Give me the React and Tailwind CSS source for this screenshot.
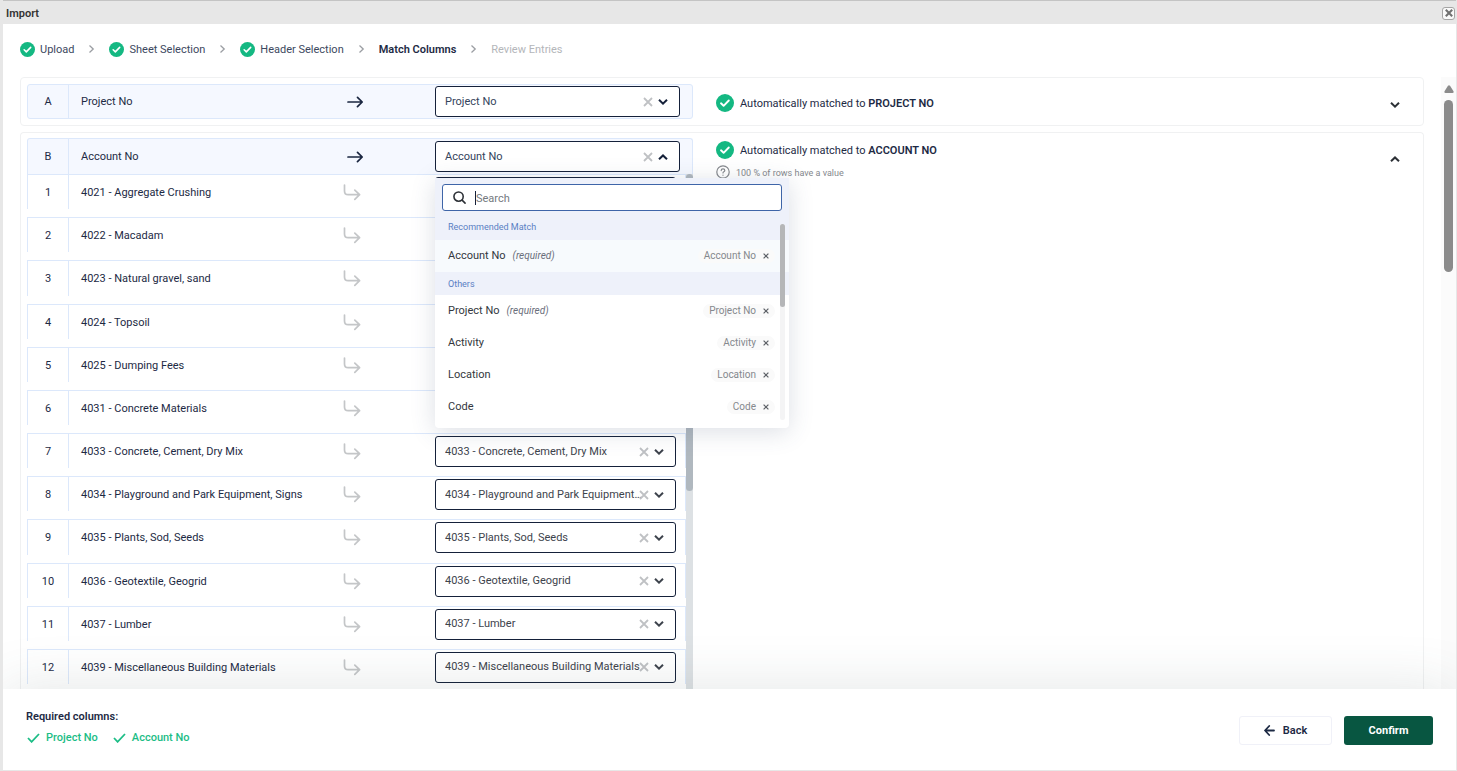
const ENTRIES = [
  '4021 - Aggregate Crushing',
  '4022 - Macadam',
  '4023 - Natural gravel, sand',
  '4024 - Topsoil',
  '4025 - Dumping Fees',
  '4031 - Concrete Materials',
  '4033 - Concrete, Cement, Dry Mix',
  '4034 - Playground and Park Equipment, Signs',
  '4035 - Plants, Sod, Seeds',
  '4036 - Geotextile, Geogrid',
  '4037 - Lumber',
  '4039 - Miscellaneous Building Materials',
];

const STEPS = [
  { label: 'Upload', state: 'done' },
  { label: 'Sheet Selection', state: 'done' },
  { label: 'Header Selection', state: 'done' },
  { label: 'Match Columns', state: 'current' },
  { label: 'Review Entries', state: 'todo' },
];

const OTHERS = [
  { name: 'Project No', required: true },
  { name: 'Activity' },
  { name: 'Location' },
  { name: 'Code' },
];

function CheckCircle({ className }) {
  return (
    <svg viewBox="0 0 18 18" className={className} aria-hidden="true">
      <circle cx="9" cy="9" r="9" fill="#14b882" />
      <path d="M5 9.3l2.6 2.5 5.2-5.3" fill="none" stroke="#fff" strokeWidth="1.9" strokeLinecap="round" strokeLinejoin="round" />
    </svg>
  );
}

function Chevron({ up, className }) {
  return (
    <svg viewBox="0 0 10 6" className={className} fill="none" stroke="currentColor" strokeWidth="2" aria-hidden="true">
      <path d={up ? 'M1 5.2L5 1.4l4 3.8' : 'M1 .8l4 3.8L9 .8'} />
    </svg>
  );
}

function Cross({ className, width = 1.6 }) {
  return (
    <svg viewBox="0 0 10 10" className={className} fill="none" stroke="currentColor" strokeWidth={width} aria-hidden="true">
      <path d="M1 1l8 8M9 1L1 9" />
    </svg>
  );
}

function ArrowRight() {
  return (
    <svg viewBox="0 0 16 12" className="h-3 w-4" fill="none" stroke="#1a2640" strokeWidth="1.7" strokeLinecap="round" strokeLinejoin="round" aria-hidden="true">
      <path d="M1 6h14M10.5 1.3L15.2 6l-4.7 4.7" />
    </svg>
  );
}

function ArrowSub() {
  return (
    <svg viewBox="0 0 18 18" className="size-[18px]" fill="none" stroke="#c4c6c8" strokeWidth="1.7" strokeLinecap="round" strokeLinejoin="round" aria-hidden="true">
      <path d="M1.5 2v6q0 3.7 3.7 3.7H16.5M11.8 7.2l4.8 4.5-4.8 4.6" />
    </svg>
  );
}

function Check() {
  return (
    <svg viewBox="0 0 13 10" className="h-[10px] w-[13px]" fill="none" stroke="currentColor" strokeWidth="1.8" aria-hidden="true">
      <path d="M1 5l3.6 3.8L12 1" />
    </svg>
  );
}

function ClearButton({ label }) {
  return (
    <button type="button" aria-label={`Clear ${label}`} className="shrink-0 text-[#bfc1c4]">
      <Cross className="size-[10px]" width={1.8} />
    </button>
  );
}

function MatchSelect({ value, label, dark }) {
  return (
    <div className="flex h-[31px] w-full items-center rounded-[3px] border border-[#15213a] bg-white pl-[9px] pr-[11px]">
      <select
        aria-label={`Match for ${label}`}
        defaultValue={value}
        className={`-mr-1 min-w-0 flex-1 appearance-none truncate bg-transparent outline-none ${dark ? 'text-[#34435c]' : 'text-[#3d434c]'}`}
      >
        <option>{value}</option>
      </select>
      <ClearButton label={label} />
      <Chevron className={`ml-[5px] h-[6px] w-[10px] shrink-0 ${dark ? 'text-[#15213a]' : 'text-[#3d434c]'}`} />
    </div>
  );
}

function HeadRow({ letter, name, children }) {
  return (
    <div className="flex h-full items-stretch">
      <div className="flex w-10 shrink-0 items-center justify-center">{letter}</div>
      <div className="flex flex-1 items-center border-l border-[#dce8fb] pl-3">{name}</div>
      <div className="flex w-[88px] items-center">
        <ArrowRight />
      </div>
      <div className="relative mr-3 w-[245px] shrink-0 self-center">{children}</div>
    </div>
  );
}

function EntryRow({ index, name }) {
  return (
    <div className="flex border-l border-t border-r border-[#dce8fb]">
      <div className="flex w-10 shrink-0 items-center justify-center pt-[2px]">{index}</div>
      <div className="flex flex-1 items-center border-l border-[#dce8fb] pl-3 pt-[2px]">{name}</div>
      <div className="flex w-[92px] items-center">
        <ArrowSub />
      </div>
      <div className="mr-[9px] w-[241px] shrink-0 pt-[2px]">
        <MatchSelect value={name} label={name} />
      </div>
    </div>
  );
}

function Option({ name, required, active }) {
  return (
    <li role="option" aria-selected={!!active} className={`flex h-8 items-center justify-between pl-[13px] pr-[14px] text-[#33373d] ${active ? 'bg-[#f7fafd]' : ''}`}>
      <span>
        {name}
        {required && <em className="ml-[7px] text-[10px] text-[#6a6e7b]">(required)</em>}
      </span>
      <span className="flex h-[14px] items-center gap-[7px] rounded-full bg-[#fafafa] pl-[6px] pr-[6px] text-[10px] text-[#85888d]">
        {name}
        <button type="button" aria-label={`Remove ${name}`} className="text-[#5c6066]">
          <Cross className="size-[6px]" width={2} />
        </button>
      </span>
    </li>
  );
}

function ColumnMenu() {
  return (
    <div className="absolute left-0 top-[37px] z-10 w-[354px] rounded-b-[4px] bg-white pb-[5px] shadow-[0_4px_24px_rgba(60,80,110,0.18)]">
      <div className="bg-[#eef1fa] px-[7px] pt-[6px]">
        <label className="flex h-[27px] items-center rounded-[3px] border border-[#3e65a8] bg-white pl-[10px]">
          <svg viewBox="0 0 14 14" className="mr-[9px] size-[13px]" fill="none" stroke="#2c3036" strokeWidth="1.7" strokeLinecap="round" aria-hidden="true">
            <circle cx="6" cy="6" r="5" />
            <path d="M9.8 9.8L13 13" />
          </svg>
          <span className="h-[14px] w-px bg-[#15213a]" />
          <input type="text" aria-label="Search columns" placeholder="Search" className="min-w-0 flex-1 bg-transparent pt-[2px] outline-none placeholder:text-[#757a80]" />
        </label>
      </div>
      <ul role="listbox" aria-label="Columns">
        <li className="flex h-[29px] items-center bg-[#eef1fa] pb-px pl-[13px] pt-[3px] text-[9px] text-[#5a80c4]">Recommended Match</li>
        <Option name="Account No" required active />
        <li className="flex h-[23px] items-center bg-[#eef1fa] pl-[13px] text-[9px] text-[#5a80c4]">Others</li>
        {OTHERS.map((o) => (
          <Option key={o.name} {...o} />
        ))}
      </ul>
      <div className="absolute bottom-2 right-1 top-[46px] w-[5px] rounded-full bg-[#f4f4f5]">
        <div className="h-[83px] rounded-full bg-[#b5b6b8]" />
      </div>
    </div>
  );
}

function MatchedTo({ name }) {
  return (
    <p className="flex items-center gap-[6px]">
      <CheckCircle className="size-[18px]" />
      <span className="pt-[2px]">
        Automatically matched to <strong className="font-semibold">{name}</strong>
      </span>
    </p>
  );
}

export default function App() {
  return (
    <div className="flex h-screen flex-col overflow-hidden border-b border-l-[3px] border-r border-[#e7e7e7] bg-white font-['Roboto',sans-serif] text-[11px] leading-4 text-[#1d2a44]">
      <header className="-ml-[3px] -mr-px flex h-6 shrink-0 items-center justify-between border-t border-[#c4c4c4] bg-[#e7e7e7] pl-[6px] pr-[2px] pt-px">
        <h1 className="pt-[2px] text-[11px] font-semibold text-[#333]">Import</h1>
        <button type="button" aria-label="Close" className="flex size-[13px] items-center justify-center rounded-[3px] border border-[#a5a5a5] bg-[#fafafa] text-[#707070]">
          <Cross className="size-2" width={2.6} />
        </button>
      </header>

      <nav aria-label="Import steps" className="shrink-0 px-[17px] pb-[19px] pt-4">
        <ol className="flex items-center gap-[14px]">
          {STEPS.map((s, i) => (
            <li key={s.label} className="flex items-center gap-[14px]">
              {i > 0 && (
                <svg viewBox="0 0 7 8" className="h-2 w-[7px]" fill="none" stroke="#9b9ea3" strokeWidth="1.3" aria-hidden="true">
                  <path d="M1.5.6L5.2 4 1.5 7.4" />
                </svg>
              )}
              <span
                className={`flex items-center gap-[5px] ${
                  s.state === 'current' ? 'font-semibold' : s.state === 'todo' ? 'text-[#b4b6ba]' : 'text-[#3c4860]'
                }`}
              >
                {s.state === 'done' && <CheckCircle className="size-[15px]" />}
                <span className="pt-[2px]">{s.label}</span>
              </span>
            </li>
          ))}
        </ol>
      </nav>

      <main className="flex min-h-0 flex-1 overflow-hidden pl-[17px]">
        <div className="flex min-w-0 flex-1 flex-col gap-[6px] overflow-hidden">
          <section className="flex shrink-0 rounded-[4px] border border-[#f0f1f2] p-[6px]">
            <div className="h-[35px] w-[666px] shrink-0 rounded-[3px] border border-[#dce8fb] bg-[#f5f8ff]">
              <HeadRow letter="A" name="Project No">
                <MatchSelect value="Project No" label="Project No" dark />
              </HeadRow>
            </div>
            <div className="ml-[23px] flex flex-1 items-center justify-between pr-[17px] pt-[3px]">
              <MatchedTo name="PROJECT NO" />
              <button type="button" aria-label="Expand column A" className="pt-1 text-[#2c3036]">
                <Chevron className="h-[6px] w-[10px]" />
              </button>
            </div>
          </section>

          <section className="flex shrink-0 rounded-t-[4px] border border-b-0 border-[#f0f1f2] px-[6px] pt-[5px]">
            <div className="w-[666px] shrink-0">
              <div className="h-9 rounded-t-[3px] border border-b-0 border-[#dce8fb] bg-[#f5f8ff]">
                <HeadRow letter="B" name="Account No">
                  <div className="flex h-[31px] w-full items-center rounded-[3px] border border-[#15213a] bg-white pl-[9px] pr-[11px]">
                    <button type="button" role="combobox" aria-expanded="true" aria-label="Match for Account No" className="flex-1 text-left text-[#34435c]">
                      Account No
                    </button>
                    <ClearButton label="Account No" />
                    <Chevron up className="ml-[5px] h-[6px] w-[10px] text-[#15213a]" />
                  </div>
                  <ColumnMenu />
                </HeadRow>
              </div>
              <div className="flex">
                <div className="grid h-[518px] flex-1 auto-rows-fr">
                  {ENTRIES.map((name, i) => (
                    <div key={name} className="grid pb-2">
                      <EntryRow index={i + 1} name={name} />
                    </div>
                  ))}
                </div>
                <div className="w-[7px] bg-[#dde1e4]">
                  <div className="h-[317px] rounded-full bg-[#b0b8bf]" />
                </div>
              </div>
            </div>
            <div className="ml-[23px] flex flex-1 items-start justify-between pr-[17px] pt-[3px]">
              <div>
                <MatchedTo name="ACCOUNT NO" />
                <p className="mt-1 flex items-center gap-[6px] text-[9px] text-[#85888d]">
                  <svg viewBox="0 0 14 14" className="size-[14px]" fill="none" stroke="#85888d" strokeWidth="1.2" strokeLinecap="round" aria-hidden="true">
                    <circle cx="7" cy="7" r="6.2" />
                    <path d="M5.2 5.6q0-1.8 1.8-1.8t1.8 1.6q0 .9-1 1.4-.8.4-.8 1.2M7 10v.2" />
                  </svg>
                  <span className="pt-[2px]">100 % of rows have a value</span>
                </p>
              </div>
              <button type="button" aria-label="Collapse column B" className="mt-[15px] text-[#2c3036]">
                <Chevron up className="h-[6px] w-[10px]" />
              </button>
            </div>
          </section>
        </div>
        <div className="ml-[17px] flex w-[15px] shrink-0 flex-col items-center bg-[#fbfbfb] pt-2">
          <svg viewBox="0 0 10 8" className="h-2 w-[10px]" fill="#8b8b8b" aria-hidden="true">
            <path d="M4 .7q1-1 2 0l3.5 5.5Q10 8 8.500 8h-7Q0 8 .5 6.200z" />
          </svg>
          <div className="mt-[7px] h-[172px] w-[9px] rounded-full bg-[#8b8b8b]" />
        </div>
      </main>

      <footer className="relative z-20 flex shrink-0 items-end justify-between bg-white pb-6 pl-[23px] pr-[23px] pt-5 shadow-[0_0_56px_rgba(70,90,90,0.15)]">
        <div>
          <p className="font-semibold">Required columns:</p>
          <ul className="mt-[5px] flex gap-[14px] text-[#1cbd86]">
            {['Project No', 'Account No'].map((c) => (
              <li key={c} className="flex items-center gap-[6px] pl-px font-medium">
                <Check />
                {c}
              </li>
            ))}
          </ul>
        </div>
        <div className="flex gap-3 pb-px">
          <button type="button" className="flex h-[29px] w-[93px] items-center justify-center gap-2 rounded-[3px] border border-[#f0f1f8] font-semibold">
            <svg viewBox="0 0 11 11" className="size-[11px]" fill="none" stroke="currentColor" strokeWidth="1.8" strokeLinecap="round" strokeLinejoin="round" aria-hidden="true">
              <path d="M10 5.500H1.200M5.200 1L1 5.500 5.200 10" />
            </svg>
            Back
          </button>
          <button type="button" className="h-[29px] w-[89px] rounded-[3px] bg-[#085641] font-bold text-white">
            Confirm
          </button>
        </div>
      </footer>
    </div>
  );
}
